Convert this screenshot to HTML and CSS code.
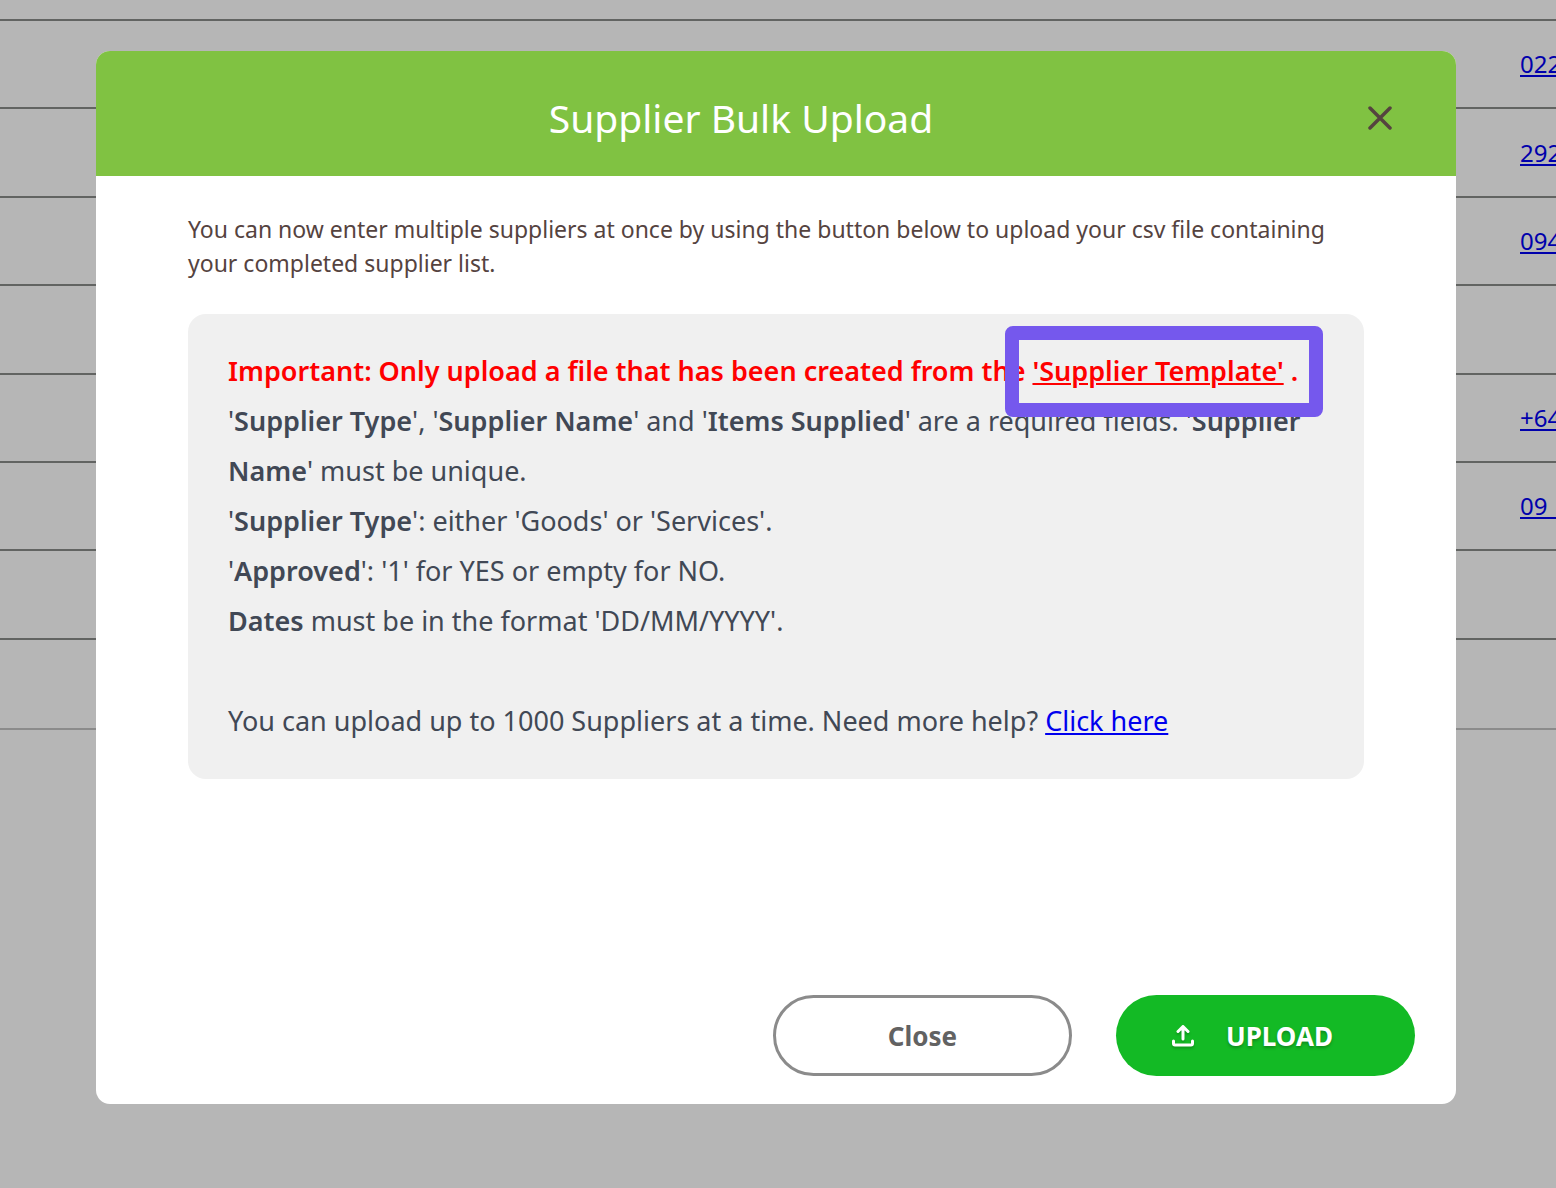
FILE: index.html
```html
<!DOCTYPE html>
<html lang="en">
<head>
<meta charset="utf-8">
<meta name="viewport" content="width=device-width, initial-scale=1">
<title>Supplier Bulk Upload</title>
<link rel="stylesheet" href="styles.css">
</head>
<body>
<div class="page">
  <table class="suppliers">
    <colgroup><col><col class="phone-col"></colgroup>
    <tbody>
      <tr><td></td><td></td></tr>
      <tr><td></td><td><a href="#">022&nbsp;</a></td></tr>
      <tr><td></td><td><a href="#">292&nbsp;</a></td></tr>
      <tr><td></td><td><a href="#">094&nbsp;</a></td></tr>
      <tr><td></td><td></td></tr>
      <tr><td></td><td><a href="#">+64&nbsp;</a></td></tr>
      <tr class="compact"><td></td><td><a href="#">09&nbsp;&nbsp;</a></td></tr>
      <tr><td></td><td></td></tr>
      <tr><td></td><td></td></tr>
    </tbody>
  </table>

  <section class="modal" role="dialog" aria-modal="true" aria-labelledby="modal-title">
    <header class="modal-header">
      <h1 class="modal-title" id="modal-title">Supplier Bulk Upload</h1>
      <button class="dismiss" type="button" aria-label="Close dialog">
        <svg width="24" height="24" viewBox="0 0 24 24" fill="none" stroke="currentColor" stroke-width="3.500" stroke-linecap="round"><path d="M2 2l20 20M22 2L2 22"/></svg>
      </button>
    </header>
    <div class="modal-body">
      <p class="intro">You can now enter multiple suppliers at once by using the button below to upload your csv file containing your completed supplier list.</p>
      <div class="notice">
        <p class="important">Important: Only upload a file that has been created from the <a href="#">'Supplier Template'</a> .</p>
        <p>'<b>Supplier Type</b>', '<b>Supplier Name</b>' and '<b>Items Supplied</b>' are a required fields. '<b>Supplier Name</b>' must be unique.</p>
        <p>'<b>Supplier Type</b>': either 'Goods' or 'Services'.</p>
        <p>'<b>Approved</b>': '1' for YES or empty for NO.</p>
        <p><b>Dates</b> must be in the format 'DD/MM/YYYY'.</p>
        <p class="help">You can upload up to 1000 Suppliers at a time. Need more help? <a href="#">Click here</a></p>
        <div class="highlight"></div>
      </div>
    </div>
    <footer class="modal-footer">
      <button class="button button-close" type="button">Close</button>
      <button class="button button-upload" type="button">
        <svg width="22" height="22" viewBox="0 0 22 22" fill="none" stroke="currentColor" stroke-width="3" stroke-linecap="round" stroke-linejoin="round"><path d="M11 14V2M6 6.500l5-5 5 5M1.500 16v2.500q0 1.500 1.500 1.500h16q1.500 0 1.500-1.500V16"/></svg>
        <span>UPLOAD</span>
      </button>
    </footer>
  </section>
</div>
</body>
</html>
```
FILE: styles.css
```css
* {
  box-sizing: border-box;
}

body {
  margin: 0;
  background: #b6b6b6;
  font-family: "Noto Sans", "Open Sans", sans-serif;
}

h1,
p {
  margin: 0;
}

.page {
  display: grid;
  grid-template-columns: minmax(0, 1fr);
  min-height: 100vh;
  overflow: hidden;
}

/* Supplier list behind the dialog */
.suppliers {
  grid-area: 1 / 1;
  align-self: start;
  width: 100%;
  table-layout: fixed;
  border-collapse: separate;
  border-spacing: 0;
  font-size: 24px;
  line-height: 32px;
  white-space: nowrap;
}

.phone-col {
  width: 36px;
}

.suppliers td {
  height: 89px;
  padding: 0;
  border-bottom: 2px solid #626462;
}

.suppliers tr:nth-child(even) td,
.suppliers .compact td {
  height: 88px;
}

.suppliers .compact + tr td {
  height: 89px;
}

.suppliers tr:first-child td {
  height: 21px;
}

.suppliers tr:last-child td {
  height: 90px;
  border-color: #8b8b8b;
}

.suppliers a {
  color: #0000ac;
}

.suppliers a,
.notice a {
  text-decoration-thickness: 2px;
  text-underline-offset: 2px;
}

/* Dialog */
.modal {
  grid-area: 1 / 1;
  display: flex;
  flex-direction: column;
  margin: 51px 100px 84px 96px;
  border-radius: 14px;
  background: #fff;
  overflow: hidden;
}

.modal-header {
  display: flex;
  align-items: center;
  padding: 33px 64px 25px 18px;
  background: #80c242;
}

.modal-title {
  flex: 1;
  color: #fff;
  font-size: 39px;
  font-weight: 400;
  line-height: 67px;
  text-align: center;
}

.dismiss {
  display: flex;
  padding: 0;
  border: 0;
  background: none;
  color: #55433f;
}

.modal-body {
  flex: 1;
  padding: 36px 92px;
}

.intro {
  color: #55433f;
  font-size: 23px;
  line-height: 34px;
}

.notice {
  position: relative;
  margin-top: 34px;
  padding: 32px 40px 33px;
  border-radius: 18px;
  background: #f0f0f0;
  color: #414855;
  font-size: 27px;
  line-height: 50px;
}

.notice b,
.important {
  font-weight: 600;
}

.important,
.important a {
  color: #f00;
}

.help {
  margin-top: 50px;
}

.help a {
  color: #00e;
}

/* Marker drawn over the template link */
.highlight {
  position: absolute;
  top: 12px;
  right: 41px;
  width: 318px;
  height: 91px;
  border: 14px solid #7558ed;
  border-radius: 8px;
  pointer-events: none;
}

.modal-footer {
  display: flex;
  justify-content: flex-end;
  gap: 44px;
  padding: 0 41px 28px;
}

.button {
  display: flex;
  align-items: center;
  justify-content: center;
  gap: 32px;
  width: 299px;
  height: 81px;
  border: 0;
  border-radius: 41px;
  font-family: inherit;
  font-size: 26px;
  font-weight: 700;
  line-height: 40px;
}

.button-close {
  border: 3px solid #8b8b8b;
  background: #fff;
  color: #626262;
}

.button-upload {
  padding-right: 32px;
  background: #13ba25;
  color: #fff;
  text-shadow: 0 2px 3px rgba(0, 0, 0, 0.25);
}

.button-upload svg {
  filter: drop-shadow(0 2px 1px rgba(0, 0, 0, 0.2));
}
```
